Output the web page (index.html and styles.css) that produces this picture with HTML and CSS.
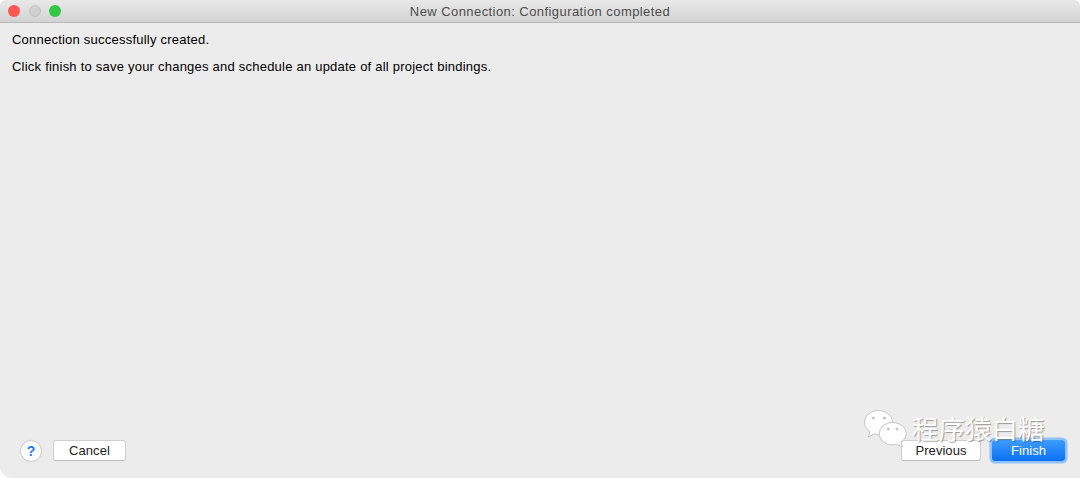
FILE: index.html
```html
<!DOCTYPE html>
<html lang="en">
<head>
    <meta charset="UTF-8">
    <meta name="viewport" content="width=device-width, initial-scale=1.0">
    <title>New Connection: Configuration completed</title>
    <link rel="stylesheet" href="styles.css">
</head>
<body>

    <div class="window">
        <div class="titlebar">
            <div class="lights">
                <span class="light red"></span>
                <span class="light grey"></span>
                <span class="light green"></span>
            </div>
            <div class="title">New Connection: Configuration completed</div>
        </div>

        <div class="content">
            <p>Connection successfully created.</p>
            <p>Click finish to save your changes and schedule an update of all project bindings.</p>
        </div>

        <div class="footer">
            <div class="footer-left">
                <button class="help">?</button>
                <button class="btn cancel">Cancel</button>
            </div>
            <div class="footer-right">
                <button class="btn previous">Previous</button>
                <button class="btn finish">Finish</button>
            </div>
        </div>

        <div class="watermark">
            <svg class="wechat" width="44" height="37" viewBox="0 0 44 37">
                <path class="bubble" d="M14.500 .5C6.800 .5 .5 5.800 .5 12.300c0 3.800 2.100 7 5.400 9.200L4.500 27l5.800-3.200c1.300.4 2.700.6 4.200.6 7.700 0 14-5.300 14-12.100S22.200 .5 14.500 .5z"/>
                <circle class="eye" cx="9.300" cy="8" r="1.600"/>
                <circle class="eye" cx="20.500" cy="8" r="1.600"/>
                <path class="bubble" d="M28.500 12.500c-7.300 0-13.200 5-13.200 11.200s5.900 11.200 13.200 11.200c1.500 0 2.900-.2 4.200-.6l5.800 2.700-1.500-5c3.200-2 5.200-4.900 5.200-8.300 0-6.200-6.400-11.200-13.700-11.200z"/>
                <circle class="eye" cx="24.300" cy="19" r="1.500"/>
                <circle class="eye" cx="33" cy="19" r="1.500"/>
            </svg>
            <span class="watermark-text">程序猿白糖</span>
        </div>
    </div>

</body>
</html>
```

FILE: styles.css
```css
* {
    margin: 0;
    padding: 0;
    box-sizing: border-box;
    font-family: 'Liberation Sans', Arial, sans-serif;
}

body {
    background: #fff;
    width: 1080px;
    height: 478px;
    overflow: hidden;
}

.window {
    position: relative;
    display: flex;
    flex-direction: column;
    height: 478px;
    background: #ececec;
    border-radius: 6px 6px 0 12px;
    overflow: hidden;
    color: #000;
}

.titlebar {
    position: relative;
    display: flex;
    align-items: center;
    justify-content: center;
    height: 23px;
    background: linear-gradient(#e9e9e9, #d3d3d3);
    border-bottom: 1px solid #b9b9b9;
}

.lights {
    position: absolute;
    left: 8px;
    top: 5px;
    display: flex;
    gap: 8.500px;
}

.light {
    width: 12px;
    height: 12px;
    border-radius: 50%;
}

.red {
    background: #fc5753;
}

.grey {
    background: #d0d0d0;
    border: 1px solid #c4c4c4;
}

.green {
    background: #33c748;
}

.title {
    font-size: 13px;
    letter-spacing: 0.43px;
    color: #4c4c4c;
}

.content {
    flex: 1;
    padding: 9px 12px 0;
    font-size: 13px;
    letter-spacing: 0.225px;
}

.content p {
    height: 15px;
    line-height: 15px;
    margin-bottom: 12px;
}

.footer {
    display: flex;
    justify-content: space-between;
    align-items: center;
    padding: 0 15px 17px 21px;
}

.footer-left,
.footer-right {
    display: flex;
    align-items: center;
}

.footer-left {
    gap: 12px;
}

.footer-right {
    gap: 11px;
}

.help {
    width: 20px;
    height: 20px;
    border: none;
    border-radius: 50%;
    background: #fff;
    box-shadow: 0 0 1px 1px #d0d0d0;
    color: #1a7cf5;
    font-size: 14px;
    font-weight: bold;
}

.btn {
    width: 73px;
    height: 21px;
    background: #fff;
    border: 1px solid #cfcfcf;
    border-bottom-color: #bdbdbd;
    border-radius: 3px;
    font-size: 13px;
    letter-spacing: 0.05px;
    color: #222;
}

.previous {
    width: 80px;
}

.finish {
    width: 73px;
    border: none;
    background: linear-gradient(#3e9dfd, #0a70f5);
    color: #fff;
    box-shadow: 0 0 0 2.500px #8ec2f8;
}

.watermark {
    position: absolute;
    left: 864px;
    top: 410px;
    display: flex;
    align-items: flex-start;
    gap: 4px;
}

.wechat .bubble {
    fill: #fff;
    stroke: #c4c4c4;
    stroke-width: 1;
}

.wechat .eye {
    fill: #c6c6c6;
}

.watermark-text {
    font-family: 'Noto Sans CJK SC', sans-serif;
    font-size: 26.500px;
    line-height: 36px;
    color: #fff;
    text-shadow: 1px 1px 1px rgba(0, 0, 0, 0.35);
}
```
